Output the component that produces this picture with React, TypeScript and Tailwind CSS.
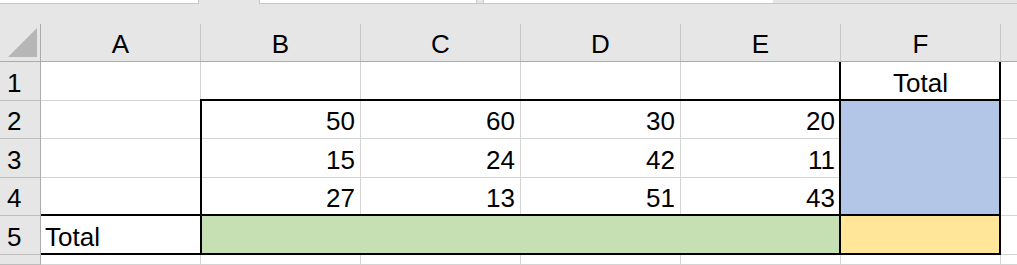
import React from "react";

type Align = "left" | "right" | "center";
type Cell = { text?: string; align?: Align; fill?: string };

const colLetters = ["A", "B", "C", "D", "E", "F"];

const BLUE = "bg-[#b4c6e7] border-[#b4c6e7]";
const GREEN = "bg-[#c6e0b4] border-[#c6e0b4]";
const YELLOW = "bg-[#ffe699] border-[#ffe699]";

const rows: { n: string; h: string; cells: Cell[] }[] = [
  {
    n: "1",
    h: "h-[39px]",
    cells: [{}, {}, {}, {}, {}, { text: "Total", align: "center" }],
  },
  {
    n: "2",
    h: "h-[38px]",
    cells: [
      {},
      { text: "50", align: "right" },
      { text: "60", align: "right" },
      { text: "30", align: "right" },
      { text: "20", align: "right" },
      { fill: BLUE },
    ],
  },
  {
    n: "3",
    h: "h-[39px]",
    cells: [
      {},
      { text: "15", align: "right" },
      { text: "24", align: "right" },
      { text: "42", align: "right" },
      { text: "11", align: "right" },
      { fill: BLUE },
    ],
  },
  {
    n: "4",
    h: "h-[38px]",
    cells: [
      {},
      { text: "27", align: "right" },
      { text: "13", align: "right" },
      { text: "51", align: "right" },
      { text: "43", align: "right" },
      { fill: BLUE },
    ],
  },
  {
    n: "5",
    h: "h-[39px]",
    cells: [
      { text: "Total", align: "left" },
      { fill: GREEN },
      { fill: GREEN },
      { fill: GREEN },
      { fill: GREEN },
      { fill: YELLOW },
    ],
  },
  { n: "", h: "h-[10px]", cells: [{}, {}, {}, {}, {}, {}] },
];

const alignCls: Record<Align, string> = {
  left: "justify-start pl-[4px]",
  right: "justify-end pr-[5px]",
  center: "justify-center",
};

export default function App() {
  return (
    <div
      className="relative w-[1017px] h-[265px] overflow-hidden bg-white text-black text-[26px] leading-[29px]"
      style={{ fontFamily: '"Liberation Sans", Arial, sans-serif' }}
    >
      {/* top strip */}
      <div className="flex h-[4px] bg-[#e6e6e6]">
        <div className="w-[199px] bg-white border-b border-r border-[#c6c6c6]" />
        <div className="w-[60px]" />
        <div className="w-[218px] bg-white border-b border-x border-[#c6c6c6]" />
        <div className="w-[6px] border-b border-[#c6c6c6]" />
        <div className="w-[290px] bg-white border-b border-l border-[#c6c6c6]" />
        <div className="flex-1 border-b border-[#c6c6c6]" />
      </div>

      {/* column headers */}
      <div className="flex h-[58px] bg-[#e6e6e6] border-b border-[#ababab] items-end">
        <div className="w-[41px] h-[37px] border-r border-[#ababab] relative">
          <svg
            width="41"
            height="37"
            viewBox="0 0 41 37"
            className="block"
          >
            <polygon points="37,4 37,33 8,33" fill="#b6b6b6" />
          </svg>
        </div>
        {colLetters.map((c) => (
          <div
            key={c}
            className="w-[160px] h-[37px] border-r border-[#c6c6c6] flex items-end justify-center pb-[2px]"
          >
            {c}
          </div>
        ))}
        <div className="flex-1 h-[37px]" />
      </div>

      {/* rows */}
      {rows.map((r, ri) => (
        <div key={ri} className={`flex ${r.h}`}>
          <div className="w-[41px] shrink-0 bg-[#e6e6e6] border-r border-b border-r-[#ababab] border-b-[#bdbdbd] flex items-end pl-[7px] pb-[2px]">
            {r.n}
          </div>
          {r.cells.map((cell, ci) => (
            <div
              key={ci}
              className={`w-[160px] shrink-0 border-r border-b flex items-end pb-[2px] ${
                cell.fill ? cell.fill : "border-[#d4d4d4]"
              } ${cell.align ? alignCls[cell.align] : ""}`}
            >
              {cell.text}
            </div>
          ))}
          <div className="flex-1 border-b border-[#d4d4d4]" />
        </div>
      ))}

      {/* thick borders drawn over the grid */}
      <div className="absolute left-[200px] top-[99px] w-[641px] h-[117px] border-2 border-black" />
      <div className="absolute left-[839px] top-[62px] w-[162px] h-[193px] border-2 border-t-0 border-black" />
      <div className="absolute left-[839px] top-[99px] w-[162px] h-[2px] bg-black" />
      <div className="absolute left-[41px] top-[214px] w-[960px] h-[41px] border-2 border-l-0 border-black" />
      <div className="absolute left-[200px] top-[214px] w-[2px] h-[41px] bg-black" />
    </div>
  );
}
